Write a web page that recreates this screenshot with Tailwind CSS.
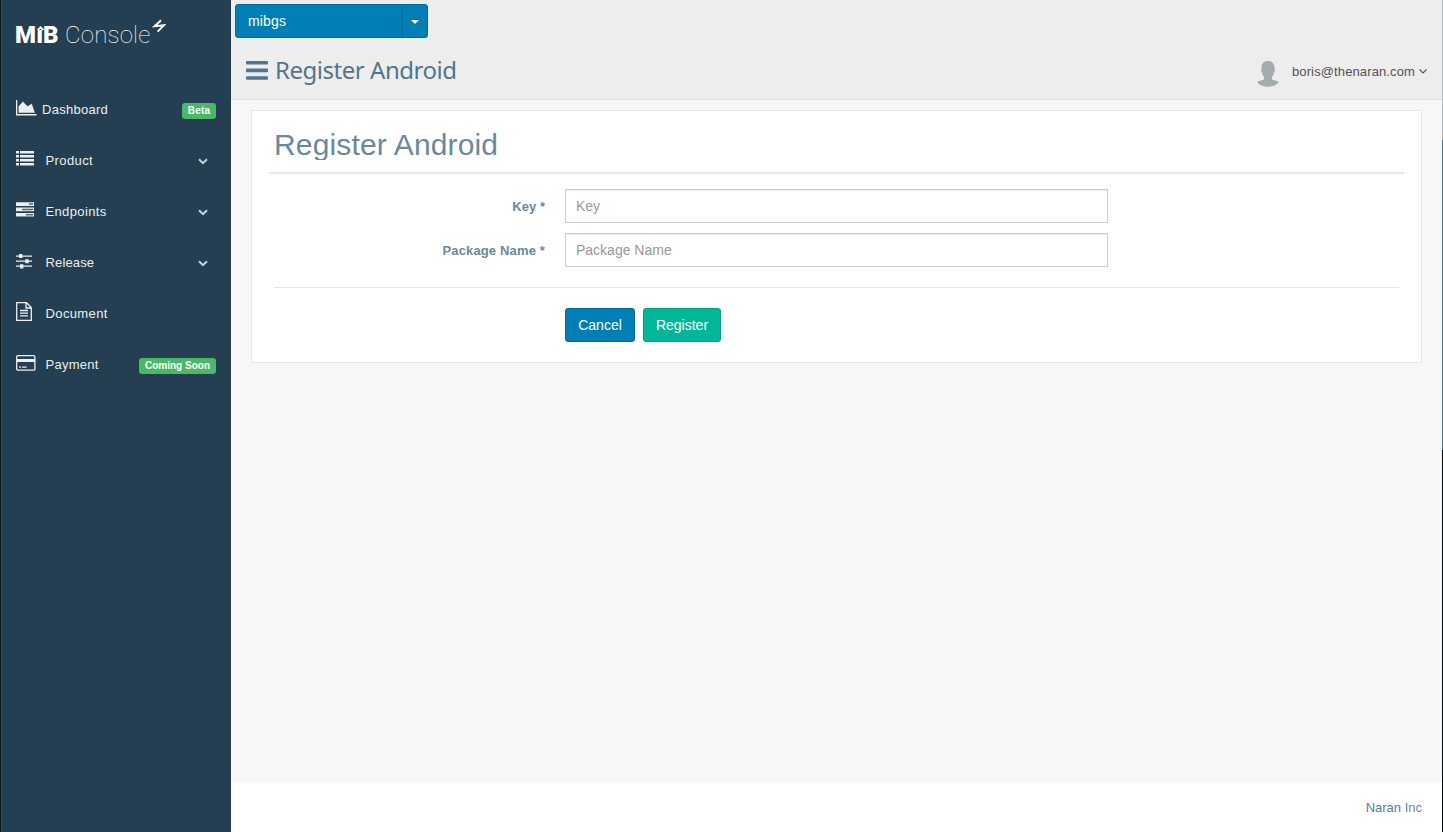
<!DOCTYPE html>
<html lang="en">
<head>
<meta charset="utf-8">
<title>MiB Console</title>
<script src="https://cdn.jsdelivr.net/npm/@tailwindcss/browser@4"></script>
</head>
<body class="flex h-[832px] w-[1443px] overflow-hidden bg-[#f7f7f7] font-['Liberation_Sans',sans-serif] text-[13px] leading-[18px]">
<div class="w-px shrink-0 bg-[#0b1114]"></div>
<aside class="w-[230px] shrink-0 border-l border-[#3a505b] bg-[#243f51] text-[#eceeef]">
  <div class="flex h-[84px] pt-[19px] pl-[13px] text-[24px] leading-[33px] text-white font-[Roboto,sans-serif]">
    <span class="relative w-[50px] text-[24px] font-black tracking-[0.1px]">Mı<svg class="absolute top-[7px] left-[22px] h-[5px] w-[7px]" viewBox="0 0 7 5" fill="#fff"><path d="M3.5 0L7 3.2 5.6 4.6 3.5 2.9 1.4 4.6 0 3.2z"/></svg>B</span>
    <span class="w-[88px] font-thin tracking-[0.2px]">Console</span>
    <svg class="h-[15px] w-[14px] -translate-x-px" viewBox="0 0 14 15" fill="none" stroke="#fff" stroke-width="1.9"><path d="M9 1.2L2.6 7.2 12 6.2 5.6 12.6"/></svg>
  </div>
  <nav class="tracking-[0.28px]">
    <a class="flex h-[51px] items-center pr-[15px] pl-3.5">
      <svg class="mr-[5px] h-4 w-[21px] -translate-y-[2px]" viewBox="0 0 21 16" fill="#eceeef"><path d="M0 0h1.3v14H20.5v1.4H0zM2.6 12.7V6.5L6.8 1.5 11.5 6.3 15.8 3.8 18.8 12.7z"/></svg>
      <span>Dashboard</span>
      <span class="ml-auto mt-[3px] h-4 w-[34px] rounded-[3px] bg-[#4ab866] text-center text-[10px] leading-4 font-bold text-white tracking-[0.15px]">Beta</span>
    </a>
    <a class="flex h-[51px] items-center pr-[23px] pl-3.5">
      <svg class="mr-[11.5px] h-[15px] w-[18px] -translate-y-[2px]" viewBox="0 0 18 15" fill="#eceeef"><path d="M0 0h3v2.5H0zM4 0h14v2.5H4zM0 4h3v2.5H0zM4 4h14v2.5H4zM0 8h3v2.5H0zM4 8h14v2.5H4zM0 12h3v2.5H0zM4 12h14v2.5H4z"/></svg>
      <span class="tracking-[0.4px]">Product</span>
      <svg class="ml-auto mt-0.5 h-[7px] w-[10px]" viewBox="0 0 10 7" fill="none" stroke="#c4d3de" stroke-width="2"><path d="M1 1.2L5 5.2 9 1.2"/></svg>
    </a>
    <a class="flex h-[51px] items-center pr-[23px] pl-3.5">
      <svg class="mr-[11.5px] h-[15px] w-[18px] -translate-y-[2px]" viewBox="0 0 18 15"><path fill="#eceeef" d="M0 .3h18v3.6H0zM0 5.6h18v3.6H0zM0 10.9h18v3.6H0z"/><path fill="#526875" d="M13 1.3h4v1.5h-4zM6 6.7h11v1.5H6zM10 12h7v1.5h-7z"/></svg>
      <span class="tracking-[0.36px]">Endpoints</span>
      <svg class="ml-auto mt-0.5 h-[7px] w-[10px]" viewBox="0 0 10 7" fill="none" stroke="#c4d3de" stroke-width="2"><path d="M1 1.2L5 5.2 9 1.2"/></svg>
    </a>
    <a class="flex h-[51px] items-center pr-[23px] pl-3.5">
      <svg class="mr-[13.5px] h-[15px] w-4 -translate-y-[1px]" viewBox="0 0 16 15" fill="#eceeef"><path d="M0 1.5h16v1.2H0zM0 6.5h16v1.2H0zM0 11.5h16v1.2H0zM3 0h3.4v4H3zM9.3 5.2h3.4v4H9.3zM4 10.2h3.4v4.2H4z"/></svg>
      <span class="tracking-[0.15px]">Release</span>
      <svg class="ml-auto mt-0.5 h-[7px] w-[10px]" viewBox="0 0 10 7" fill="none" stroke="#c4d3de" stroke-width="2"><path d="M1 1.2L5 5.2 9 1.2"/></svg>
    </a>
    <a class="flex h-[51px] items-center pr-[15px] pl-3.5">
      <svg class="mr-[13.5px] h-[19px] w-4 -translate-y-[2px]" viewBox="0 0 16 19" fill="none" stroke="#eceeef" stroke-width="1.3"><path d="M.7 .7H10.5L15.3 5.6V18.3H.7zM10 .7V6H15.3M4 8.5h8M4 11.2h8M4 13.9h8"/></svg>
      <span class="tracking-[0.38px]">Document</span>
    </a>
    <a class="flex h-[51px] items-center pr-[15px] pl-3.5">
      <svg class="mr-[9.5px] h-4 w-5 -translate-y-[2px]" viewBox="0 0 20 16" fill="none" stroke="#eceeef" stroke-width="1.3"><rect x=".7" y=".7" width="18.2" height="14.4" rx="1.2"/><path stroke-width="3" d="M1 5.5H19"/><path d="M3 12.2h2M6 12.2h4.5"/></svg>
      <span>Payment</span>
      <span class="ml-auto mt-[3px] h-4 w-[77px] rounded-[3px] bg-[#4ab866] text-center text-[10px] leading-4 font-bold text-white tracking-[0.02px]">Coming Soon</span>
    </a>
  </nav>
</aside>
<main class="flex w-[1211px] shrink-0 flex-col">
  <header class="h-[100px] shrink-0 border-b border-[#d9dee4] bg-[#ededed] pt-1">
    <div class="ml-1 flex h-[34px] w-[193px] rounded-[3px] border border-[#006da1] bg-[#007eb5] text-sm leading-8 text-white">
      <span class="w-[167px] border-r border-[#006da1] pl-3 tracking-[0.15px]">mibgs</span>
      <svg class="mt-[15px] ml-2 h-1 w-2" viewBox="0 0 8 4" fill="#fff"><path d="M0 0h8L4 4z"/></svg>
    </div>
    <div class="flex h-[61px] items-center pr-[15px] pl-[15px]">
      <svg class="mt-[4px] h-[19px] w-[22px]" viewBox="0 0 22 19" fill="#52758f"><rect width="22" height="3.6" rx="1"/><rect y="7.6" width="22" height="3.6" rx="1"/><rect y="15.2" width="22" height="3.6" rx="1"/></svg>
      <h1 class="ml-[7px] mt-[3px] font-['Noto_Sans',sans-serif] text-[24px] leading-8 tracking-[-0.47px] text-[#52758f]">Register Android</h1>
      <svg class="mt-[10px] ml-auto h-[27px] w-[22px]" viewBox="0 0 22 27" fill="#a3abad"><path d="M11 1C6.5 1 4.3 4 4.6 8.5C3.7 9 4.2 12 5.2 12.7C5.5 14.8 6.2 16.2 7 17V19.5C6 20.5 2 20.3 .3 22C4 28.3 18 28.3 21.7 22C20 20.3 16 20.5 15 19.5V17C15.8 16.2 16.5 14.8 16.8 12.7C17.8 12 18.3 9 17.4 8.5C17.7 4 15.5 1 11 1z"/></svg>
      <span class="ml-[13px] mt-[6px] tracking-[0.12px] text-[#515356]">boris@thenaran.com</span>
      <svg class="mt-[6px] ml-[4px] h-[5px] w-2" viewBox="0 0 8 5" fill="none" stroke="#515356" stroke-width="1.1"><path d="M.5 .5L4 4 7.5 .5"/></svg>
    </div>
  </header>
  <section class="mt-[10px] mr-5 ml-5 h-[253px] border border-[#e4e7ea] bg-white px-[17px] text-[#6b889c]">
    <div class="h-[63px] border-b-2 border-[#e4e8ee] px-[5px] pt-[18px]">
      <h2 class="h-[31px] overflow-hidden text-[30px] leading-8 tracking-[0.15px]">Register Android</h2>
    </div>
    <form class="px-[5px] pt-[15px]">
      <div class="flex">
        <label class="w-[271px] pt-[9px] text-right font-bold tracking-[0.05px]">Key *</label>
        <input class="ml-5 h-[34px] w-[543px] border border-[#ccc] px-[10px] text-sm shadow-[inset_0_1px_1px_rgba(0,0,0,0.075)] placeholder:text-[#999]" placeholder="Key">
      </div>
      <div class="mt-[10px] flex">
        <label class="w-[271px] pt-[9px] text-right font-bold tracking-[0.15px]">Package Name *</label>
        <input class="ml-5 h-[34px] w-[543px] border border-[#ccc] px-[10px] text-sm shadow-[inset_0_1px_1px_rgba(0,0,0,0.075)] placeholder:text-[#999]" placeholder="Package Name">
      </div>
      <hr class="mt-5 border-[#e5e5e5]">
      <div class="mt-5 ml-[291px] flex gap-2 text-sm leading-8 text-white">
        <button type="button" class="h-[34px] w-[70px] rounded-[3px] border border-[#006da1] bg-[#007eb5]">Cancel</button>
        <button type="button" class="h-[34px] w-[78px] rounded-[3px] border border-[#00a184] bg-[#00b899]">Register</button>
      </div>
    </form>
  </section>
  <footer class="mt-auto h-[49px] bg-white pt-4 pr-5 text-right text-[#5a7c97]">Naran <span class="text-[#6b8aa2]">Inc</span></footer>
</main>
<div class="flex w-px shrink-0 flex-col"><i class="h-[140px] bg-[#b4b8ba]"></i><i class="h-[310px] bg-[#59707d]"></i><i class="h-[382px] bg-[#05080a]"></i></div>
</body>
</html>
